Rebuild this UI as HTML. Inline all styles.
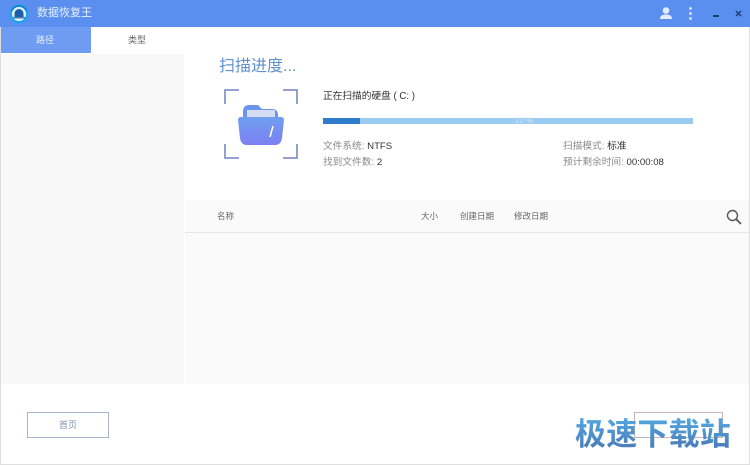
<!DOCTYPE html>
<html><head><meta charset="utf-8"><style>
html,body{margin:0;padding:0;background:#fff}
#p{position:relative;width:750px;height:465px;overflow:hidden;background:#fff;font-family:"Liberation Sans","Noto Sans CJK SC",sans-serif}
#p div,#p span{position:absolute;white-space:nowrap}
.t{font-size:9.7px;line-height:12px;color:#666}
.g{color:#8a8a8a}
.d{color:#333}
.n{position:static!important;font-size:9.6px}
.h{font-size:8.5px}
</style></head><body><div id="p">
<div style="left:0;top:0;width:750px;height:27px;background:#5b8fef"></div>
<svg style="position:absolute;left:9px;top:4px" width="20" height="20" viewBox="0 0 20 20"><circle cx="10" cy="10" r="9.500" fill="#1fa5ec"/><path d="M2.500 7A8 8 0 0 1 17.500 7" stroke="#0f7fd0" stroke-width="1.500" fill="none"/><circle cx="10" cy="10" r="7" fill="#e9f5fd"/><path d="M5.500 13.500V9.500a4.500 4.500 0 0 1 9 0v4z" fill="#1c5fa8"/><rect x="4" y="13" width="12" height="1.500" fill="#3f7fc0"/></svg>
<div style="left:37px;top:6px;font-size:11px;line-height:15px;color:#e8f0fd">数据恢复王</div>
<svg style="position:absolute;left:660px;top:7px" width="12" height="12" viewBox="0 0 12 12"><circle cx="6" cy="3.500" r="3.300" fill="#e3ecfb"/><path d="M0 12c0-3.500 2.500-4.500 6-4.500s6 1 6 4.500z" fill="#e3ecfb"/></svg>
<div style="left:689px;top:7px;width:3px;height:3px;background:#cfdcf6;border-radius:2px"></div>
<div style="left:689px;top:12px;width:3px;height:3px;background:#cfdcf6;border-radius:2px"></div>
<div style="left:689px;top:17px;width:3px;height:3px;background:#cfdcf6;border-radius:2px"></div>
<div style="left:713px;top:15px;width:6px;height:2px;background:#1d3f78"></div>
<svg style="position:absolute;left:735px;top:10px" width="7" height="7" viewBox="0 0 7 7"><path d="M1 1l5 5M6 1l-5 5" stroke="#1d3f78" stroke-width="1.500"/></svg>
<div style="left:1px;top:27px;width:90px;height:26px;background:#6f9bf2"></div>
<div style="left:36px;top:34px;font-size:9px;line-height:13px;color:#e6eefc">路径</div>
<div style="left:128px;top:34px;font-size:9px;line-height:13px;color:#666">类型</div>
<div style="left:0;top:54px;width:184px;height:330px;background:#f8f8f8"></div>
<div style="left:185px;top:200px;width:565px;height:184px;background:#fafafa"></div>
<div style="left:185px;top:232px;width:565px;height:1px;background:#e6e6e6"></div>
<div style="left:219px;top:56px;font-size:16px;line-height:21px;color:#6090cf">扫描进度...</div>
<svg style="position:absolute;left:222px;top:88px" width="78" height="74" viewBox="0 0 78 74" fill="none"><defs><linearGradient id="f" x1="0" y1="0" x2="0" y2="1"><stop offset="0" stop-color="#6f9ff0"/><stop offset="1" stop-color="#7c80f2"/></linearGradient></defs><path d="M3 16V2h14M61 2h14v14M3 56v14h14M61 70h14V56" stroke="#7482c4" stroke-width="1.500"/><path d="M21 24q0-7 6-7h9l4 4h10q6 0 6 6v6H21z" fill="#6d94ec"/><rect x="25" y="22" width="28" height="8" fill="#d5dcf6"/><path d="M16 32q0-3 3-3h40q3 0 3 3l-2 18q-1 7-7 7H25q-6 0-7-7z" fill="url(#f)"/><path d="M51 38l-3 11" stroke="#fff" stroke-width="1.500"/></svg>
<div class="t d" style="left:323px;top:91px">正在扫描的硬盘 ( C: )</div>
<div style="left:323px;top:118px;width:370px;height:6px;background:#9ccbf1"></div>
<div style="left:323px;top:118px;width:37px;height:6px;background:#2f7ccc"></div>
<div style="left:515px;top:115px;font-size:8px;line-height:11px;color:#cfe4f6">10 %</div>
<div class="t g" style="left:323px;top:141px">文件系统: <span class="d n">NTFS</span></div>
<div class="t g" style="left:323px;top:157px">找到文件数: <span class="d n">2</span></div>
<div class="t g" style="left:563px;top:141px">扫描模式: <span class="d" style="position:static">标准</span></div>
<div class="t g" style="left:563px;top:157px">预计剩余时间: <span class="d n">00:00:08</span></div>
<div class="t h" style="left:217px;top:210px">名称</div>
<div class="t h" style="left:421px;top:210px">大小</div>
<div class="t h" style="left:460px;top:210px">创建日期</div>
<div class="t h" style="left:514px;top:210px">修改日期</div>
<svg style="position:absolute;left:726px;top:209px" width="16" height="16" viewBox="0 0 16 16" fill="none"><circle cx="6.500" cy="6.500" r="5" stroke="#555" stroke-width="1.400"/><path d="M10 10l5 5" stroke="#555" stroke-width="1.800"/></svg>
<div style="left:27px;top:412px;width:80px;height:24px;border:1px solid #a6b5c9;background:#fff"></div>
<div style="left:59px;top:419px;font-size:9px;line-height:12px;color:#7f93b5">首页</div>
<div style="left:634px;top:412px;width:87px;height:24px;border:1px solid #c9b3b3;background:#fff"></div>
<div style="left:575px;top:417px;font-size:31px;line-height:36px;font-weight:bold;letter-spacing:.2px;background:linear-gradient(#52a8e0,#4a76b4);-webkit-background-clip:text;background-clip:text;color:transparent">极速下载站</div>
<div style="left:0;top:27px;width:1px;height:438px;background:#dedede"></div>
<div style="left:749px;top:27px;width:1px;height:438px;background:#dedede"></div>
<div style="left:0;top:464px;width:750px;height:1px;background:#dedede"></div>
</div></body></html>
